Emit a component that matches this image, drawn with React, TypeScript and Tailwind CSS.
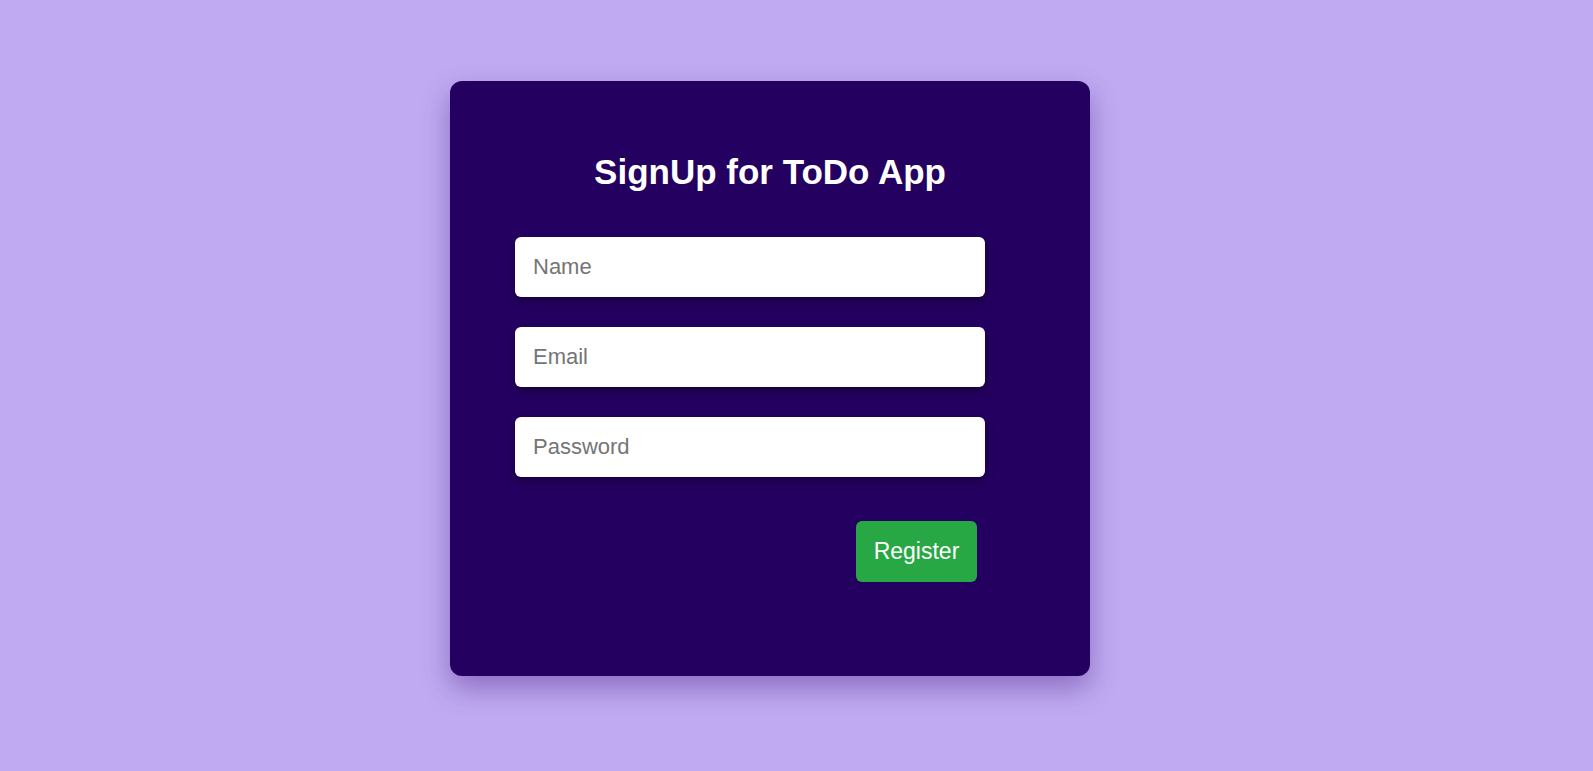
import React, { useState } from "react";

const fields = [
  { id: "name", type: "text", placeholder: "Name" },
  { id: "email", type: "email", placeholder: "Email" },
  { id: "password", type: "password", placeholder: "Password" },
];

export default function App() {
  const [values, setValues] = useState<Record<string, string>>({});

  return (
    <div className="min-h-[771px] w-full bg-[#c0abf2] pl-[450px] pt-[81px] font-['Liberation_Sans',Arial,sans-serif]">
      {/* Signup card */}
      <div className="flex h-[595px] w-[640px] flex-col rounded-[12px] bg-[#240060] pt-[71px] shadow-[0_12px_28px_rgba(60,20,120,0.4)]">
        <h1 className="text-center text-[35px] font-bold leading-[40px] text-white">
          SignUp for ToDo App
        </h1>

        <form
          className="mt-[45px] flex flex-col gap-[30px] pl-[65px]"
          onSubmit={(e) => e.preventDefault()}
        >
          {fields.map((f) => (
            <input
              key={f.id}
              type={f.type}
              placeholder={f.placeholder}
              value={values[f.id] ?? ""}
              onChange={(e) => setValues({ ...values, [f.id]: e.target.value })}
              className="h-[60px] w-[470px] rounded-[6px] bg-white px-[18px] text-[22px] text-[#222] shadow-[0_4px_8px_rgba(0,0,0,0.35)] outline-none placeholder:text-[#757575]"
            />
          ))}

          <div className="mt-[14px] flex w-[462px] justify-end">
            <button
              type="submit"
              className="h-[61px] w-[121px] rounded-[6px] bg-[#28a745] text-[23px] text-white"
            >
              Register
            </button>
          </div>
        </form>
      </div>
    </div>
  );
}
